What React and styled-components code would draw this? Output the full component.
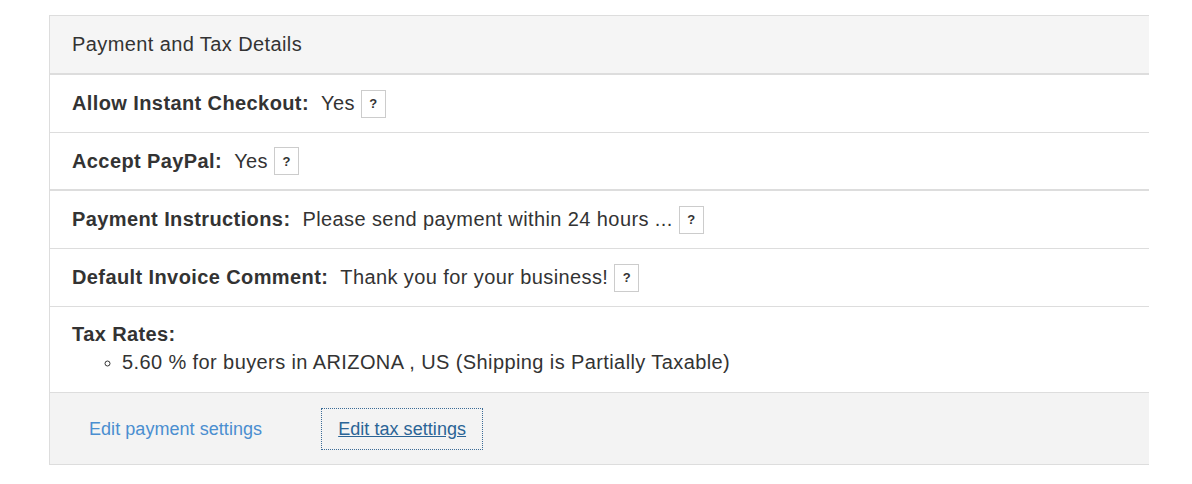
import React from "react";
import styled, { createGlobalStyle } from "styled-components";

const Global = createGlobalStyle`
  html, body { margin: 0; padding: 0; background: #fff; }
  body { font-family: "Liberation Sans", Arial, sans-serif; color: #333; }
`;

const Page = styled.div`
  padding: 15px 0 0 49px;
`;

const Panel = styled.section`
  width: 1099px;
  border: 1px solid #ddd;
  border-right: none;
  background: #fff;
  font-size: 20px;
  letter-spacing: 0.4px;
`;

const Header = styled.div`
  height: 59px;
  box-sizing: border-box;
  display: flex;
  align-items: center;
  padding: 0 22px;
  background: #f5f5f5;
  border-bottom: 2px solid #ddd;
  color: #333;
`;

const Row = styled.div`
  height: 58px;
  display: flex;
  align-items: center;
  padding: 0 22px;
  border-bottom: ${(p) => (p.$thick ? "2px" : "1px")} solid #ddd;
  box-sizing: border-box;
  white-space: nowrap;
`;

const Label = styled.b`
  font-weight: bold;
  margin-right: 12px;
`;

const Help = styled.span`
  display: inline-flex;
  align-items: center;
  justify-content: center;
  width: 25px;
  height: 28px;
  margin-left: 6px;
  border: 1px solid #ccc;
  background: #fff;
  font-size: 13px;
  letter-spacing: 0;
  font-weight: bold;
  color: #333;
  box-sizing: border-box;
`;

const TaxBlock = styled.div`
  padding: 15px 22px 18px;
  border-bottom: 1px solid #ddd;
  line-height: 24px;
`;

const TaxList = styled.ul`
  margin: 4px 0 0;
  padding-left: 50px;
  list-style: circle;
  li { line-height: 24px; }
  li::marker { font-size: 17px; }
`;

const Footer = styled.div`
  height: 71px;
  display: flex;
  align-items: center;
  padding: 0 38px;
  gap: 58px;
  background: #f3f3f3;
  font-size: 18px;
  letter-spacing: 0.05px;
`;

const Link = styled.a`
  display: inline-block;
  line-height: 20px;
  color: ${(p) => (p.$focused ? "#2a6496" : "#4a8ed0")};
  text-decoration: ${(p) => (p.$focused ? "underline" : "none")};
  padding: ${(p) => (p.$focused ? "10px 16px" : "10px 0")};
  border: 1px dotted ${(p) => (p.$focused ? "#3b6b96" : "transparent")};
  cursor: pointer;
`;

export default function App() {
  return (
    <>
      <Global />
      <Page>
        <Panel>
          <Header>Payment and Tax Details</Header>
          <Row>
            <Label>Allow Instant Checkout:</Label>Yes<Help>?</Help>
          </Row>
          <Row $thick>
            <Label>Accept PayPal:</Label>Yes<Help>?</Help>
          </Row>
          <Row>
            <Label>Payment Instructions:</Label>Please send payment within 24 hours ...<Help>?</Help>
          </Row>
          <Row>
            <Label>Default Invoice Comment:</Label>Thank you for your business!<Help>?</Help>
          </Row>
          <TaxBlock>
            <b>Tax Rates:</b>
            <TaxList>
              <li>5.60 % for buyers in ARIZONA , US (Shipping is Partially Taxable)</li>
            </TaxList>
          </TaxBlock>
          <Footer>
            <Link href="#">Edit payment settings</Link>
            <Link href="#" $focused>Edit tax settings</Link>
          </Footer>
        </Panel>
      </Page>
    </>
  );
}
